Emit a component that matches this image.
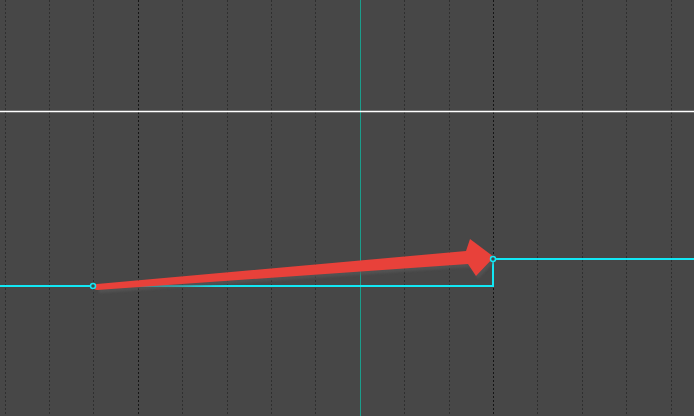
import React from "react";

export default function App() {
  const xs: number[] = [];
  for (let k = 0; k < 16; k++) xs.push(4.5 + k * 44.4);
  const arrow = "97,284 466,251 470,239 494,257 476,276 468,264 97,290";
  return (
    <div className="w-[694px] h-[416px] bg-[#474747] overflow-hidden">
      <svg width="694" height="416" viewBox="0 0 694 416" className="block">
        <defs>
          <filter id="sh" x="-10%" y="-50%" width="120%" height="200%">
            <feGaussianBlur stdDeviation="1.2" />
          </filter>
        </defs>
        {xs.map((x, i) => {
          const rx = Math.round(x) + 0.5;
          const dark = Math.abs(rx - 138.5) < 2 || Math.abs(rx - 493.5) < 2;
          const cyan = Math.abs(rx - 360.5) < 2;
          if (cyan) return null;
          return (
            <line
              key={i}
              x1={rx}
              y1={0}
              x2={rx}
              y2={416}
              stroke={dark ? "#151515" : "#2f2f2f"}
              strokeWidth={1}
              strokeDasharray="2 2"
            />
          );
        })}
        <line x1={360.5} y1={0} x2={360.5} y2={416} stroke="#1b9e8c" strokeWidth={1} />
        <line x1={0} y1={111.5} x2={694} y2={111.5} stroke="#ffffff" strokeWidth={1.3} />
        <polyline
          points="0,286 493,286 493,259 694,259"
          fill="none"
          stroke="#12e8f5"
          strokeWidth={2}
        />
        <g transform="translate(2,3)" filter="url(#sh)" opacity="0.6">
          <polygon points={arrow} fill="#5a5a5a" />
        </g>
        <polygon points={arrow} fill="#e8413a" />
        <circle cx={97} cy={287} r={3} fill="#e8413a" />
        <circle cx={93} cy={286} r={2.5} fill="#474747" stroke="#12e8f5" strokeWidth={1.5} />
        <circle cx={493} cy={259} r={2.5} fill="#474747" stroke="#12e8f5" strokeWidth={1.5} />
      </svg>
    </div>
  );
}
